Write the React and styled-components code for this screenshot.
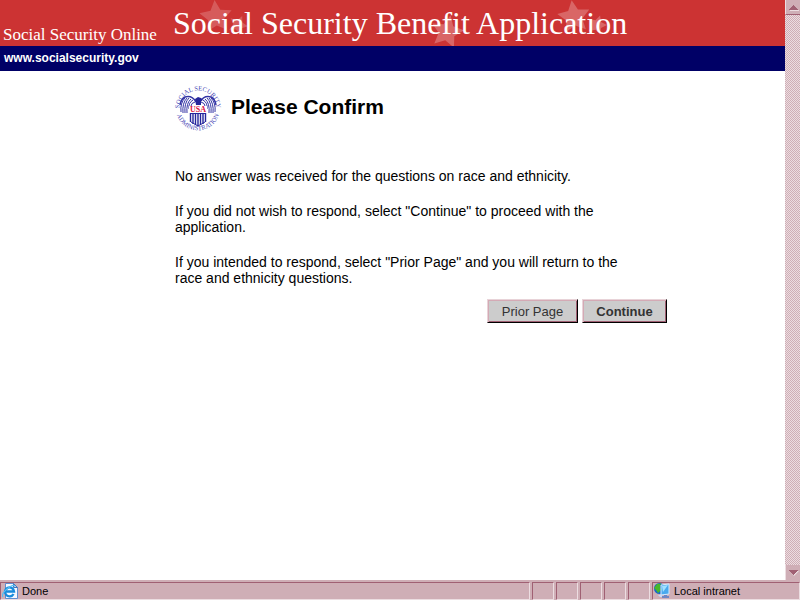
import React from 'react'
import styled, { createGlobalStyle } from 'styled-components'

const GlobalStyle = createGlobalStyle`
    * {
        box-sizing: border-box;
    }

    body {
        margin: 0;
        background: #fff;
        color: #000;
        font-family: "Liberation Sans", Arial, sans-serif;
        font-size: 14px;
        line-height: 16px;
    }
`

const Window = styled.div`
    display: flex;
    flex-direction: column;
    height: 100vh;
`

const Viewport = styled.div`
    display: flex;
    flex: 1;
    min-height: 0;
`

const Page = styled.div`
    flex: 1;
    min-width: 0;
    overflow: hidden;
`

const Banner = styled.header`
    position: relative;
    display: flex;
    align-items: flex-end;
    height: 46px;
    background: #cc3333;
    color: #fff;
    font-family: "Liberation Serif", "Times New Roman", serif;
    white-space: nowrap;
`

const Stars = styled.svg`
    position: absolute;
    top: 0;
    left: 173px;
`

const Brand = styled.div`
    position: relative;
    flex: 0 0 173px;
    padding: 0 0 1px 3px;
    font-size: 17px;
    line-height: 20px;
`

const BannerTitle = styled.div`
    position: relative;
    align-self: flex-start;
    font-size: 32px;
    line-height: 46px;
`

const SiteBar = styled.nav`
    display: flex;
    height: 25px;
    padding: 4px;
    background: #000066;
`

const SiteLink = styled.a`
    color: #fff;
    font-size: 12px;
    font-weight: bold;
    text-decoration: none;
`

const Content = styled.main`
    max-width: 667px;
    padding: 14px 0 0 175px;
`

const Heading = styled.div`
    display: flex;
    align-items: center;
    gap: 10px;
    margin-bottom: 35px;
`

const SealDrawing = styled.svg`
    overflow: visible;
`

const Title = styled.h1`
    margin: 0;
    padding-bottom: 4px;
    font-size: 21px;
    line-height: 24px;
`

const Text = styled.p`
    max-width: 460px;
    margin: 0 0 19px;
`

const Actions = styled.div`
    display: flex;
    justify-content: flex-end;
    gap: 4px;
    margin-top: -6px;
`

const Button = styled.button`
    width: ${props => (props.$primary ? 85 : 91)}px;
    height: 24px;
    padding: 0;
    border: 1px solid;
    border-color: #e8d3d8 #000 #000 #e8d3d8;
    border-radius: 0;
    background: #cccccc;
    box-shadow: inset 1px 1px #d4aab5, inset -1px -1px #a06073;
    color: #333;
    font-family: inherit;
    font-size: 13px;
    font-weight: ${props => (props.$primary ? 'bold' : 'normal')};
`

const ScrollBar = styled.div`
    display: flex;
    flex-direction: column;
    width: 15px;
    background: repeating-conic-gradient(#cfaeb6 0 25%, #ecdde1 0 50%) 0 0 / 2px 2px;
`

const ScrollButton = styled.button`
    display: flex;
    align-items: center;
    justify-content: center;
    height: 15px;
    margin-top: ${props => (props.$end ? 'auto' : 0)};
    padding: 0;
    border: 0;
    border-left: 1px solid #ecdde1;
    border-bottom: ${props => (props.$end ? 0 : '1px solid #a06073')};
    border-radius: 0;
    background: #cfaeb6;
`

const StatusBar = styled.footer`
    display: flex;
    gap: 2px;
    height: 20px;
    padding-top: 2px;
    background: #cfaeb6;
    font-size: 11px;
`

const Pane = styled.div`
    display: flex;
    align-items: center;
    gap: 4px;
    flex: ${props => (props.$width ? `0 0 ${props.$width}px` : 1)};
    padding-left: 1px;
    border: 1px solid;
    border-color: #a06073 #ecdde1 #ecdde1 #a06073;
    white-space: nowrap;
`

const Star = ({ x, y, size, rotate = 0, opacity = 0.2 }) => (
    <polygon
        points="0,-10 2.9,-4 9.5,-3.1 4.7,1.5 5.9,8.1 0,5 -5.9,8.1 -4.7,1.5 -9.5,-3.1 -2.9,-4"
        transform={`translate(${x} ${y}) rotate(${rotate}) scale(${size / 10})`}
        fill="#fff"
        opacity={opacity}
    />
)

const BannerStars = () => (
    <Stars width="470" height="46" viewBox="0 0 470 46" aria-hidden="true">
        <Star x={43} y={17} size={17} rotate={-5} />
        <Star x={65} y={25} size={10} rotate={25} />
        <Star x={274} y={32} size={17} rotate={12} opacity={0.25} />
        <Star x={401} y={17} size={17} rotate={-8} opacity={0.25} />
        <Star x={424} y={25} size={10} rotate={18} opacity={0.25} />
    </Stars>
)

const Seal = () => (
    <SealDrawing width="46" height="48" viewBox="0 0 46 48" role="img" aria-label="Social Security Administration">
        <defs>
            <path id="seal-top" d="M4.700 28A18.700 18.700 0 1 1 41.300 28" />
            <path id="seal-bottom" d="M1.500 28A22 22 0 0 0 44.500 28" />
        </defs>
        <g fill="#4747b5" fontFamily="Liberation Serif, serif" fontSize="6.500" textAnchor="middle">
            <text>
                <textPath href="#seal-top" startOffset="50%">SOCIAL SECURITY</textPath>
            </text>
            <text>
                <textPath href="#seal-bottom" startOffset="50%">ADMINISTRATION</textPath>
            </text>
        </g>
        <g fill="none" stroke="#3434a5" strokeWidth="1">
            <path d="M21 17Q17 10 10 12Q6 14 5 20" strokeWidth="1.500" />
            <path d="M10 13Q5 18 6 27M12 13Q7 18 8 28M14 13Q9 18 10 28M16 14Q11 18 12 28M18 15Q13 18 14 24M20 17Q16 18 16 21" />
            <path d="M25 17Q29 10 36 12Q40 14 41 20" strokeWidth="1.500" />
            <path d="M36 13Q41 18 40 27M34 13Q39 18 38 28M32 13Q37 18 36 28M30 14Q35 18 34 28M28 15Q33 18 32 24M26 17Q30 18 30 21" />
        </g>
        <path d="M20 14l3-2 3 1 2 2-2 1v4h-5z" fill="#26269c" />
        <path d="M14 21h18v7H14z" fill="#fff" />
        <path d="M15.500 28v9M18 28v11M20.500 28v12M23 28v13M25.500 28v12M28 28v11M30.500 28v9" stroke="#26269c" strokeWidth="1.400" />
        <path d="M15 28.500h16M16 37l7 4 7-4" fill="none" stroke="#26269c" strokeWidth="1" />
        <text x="23" y="27" textAnchor="middle" fill="#dd1144" fontFamily="Liberation Serif, serif" fontSize="8" fontWeight="bold">USA</text>
    </SealDrawing>
)

const Arrow = ({ down }) => (
    <svg width="11" height="7" viewBox="0 0 11 7" aria-hidden="true">
        <path d={down ? 'M2 2h9L6 7z' : 'M2 6h9v1H2z'} fill="#ecdde1" />
        <path d={down ? 'M1 1h9L5.500 6z' : 'M1 6h9L5.500 1z'} fill="#a06073" shapeRendering="crispEdges" />
    </svg>
)

const BrowserIcon = () => (
    <svg width="16" height="16" viewBox="0 0 16 16" aria-hidden="true">
        <path d="M3.500.5h8l4 4v11h-12z" fill="#f5f8ff" stroke="#5f8dd0" />
        <path d="M11.500.5v4h4z" fill="#b5cff0" stroke="#4475ba" />
        <path d="M11.500 11A4.500 4.500 0 1 1 12 8.500H3.500" fill="none" stroke="#188bdc" strokeWidth="2.400" />
        <path d="M1 14Q-1 11 5 6T13 3" fill="none" stroke="#55bdf2" strokeWidth="1.200" />
    </svg>
)

const IntranetIcon = () => (
    <svg width="16" height="16" viewBox="0 0 16 16" aria-hidden="true">
        <circle cx="5.500" cy="5.500" r="5.500" fill="#1767c9" />
        <path d="M0 5l3-4 4-.5L6 4l1 3-3 3-2-3z" fill="#48b82b" />
        <path d="M7 2l8-1v10l-8 1z" fill="#4aa9ed" stroke="#d3eaff" />
        <path d="M8 3l6-1-5 7z" fill="#a2e0ff" />
        <path d="M10 12h3v1h2v2H8v-2h2z" fill="#6f87c4" />
        <path d="M4 12h4v2H6z" fill="#c7d9f5" />
    </svg>
)

const App = () => (
    <Window>
        <GlobalStyle />

        <Viewport>
            <Page>
                <Banner>
                    <BannerStars />
                    <Brand>Social Security Online</Brand>
                    <BannerTitle>Social Security Benefit Application</BannerTitle>
                </Banner>
                <SiteBar>
                    <SiteLink href="#home">www.socialsecurity.gov</SiteLink>
                </SiteBar>

                <Content>
                    <Heading>
                        <Seal />
                        <Title>Please Confirm</Title>
                    </Heading>

                    <Text>No answer was received for the questions on race and ethnicity.</Text>
                    <Text>
                        If you did not wish to respond, select "Continue" to proceed with the application.
                    </Text>
                    <Text>
                        If you intended to respond, select "Prior Page" and you will return to the race
                        and ethnicity questions.
                    </Text>

                    <Actions>
                        <Button type="button">Prior Page</Button>
                        <Button type="button" $primary>Continue</Button>
                    </Actions>
                </Content>
            </Page>

            <ScrollBar>
                <ScrollButton type="button" aria-label="Scroll up">
                    <Arrow />
                </ScrollButton>
                <ScrollButton type="button" aria-label="Scroll down" $end>
                    <Arrow down />
                </ScrollButton>
            </ScrollBar>
        </Viewport>

        <StatusBar>
            <Pane>
                <BrowserIcon />
                Done
            </Pane>
            <Pane $width={22} />
            <Pane $width={22} />
            <Pane $width={22} />
            <Pane $width={22} />
            <Pane $width={22} />
            <Pane $width={148}>
                <IntranetIcon />
                Local intranet
            </Pane>
        </StatusBar>
    </Window>
)

export default App
